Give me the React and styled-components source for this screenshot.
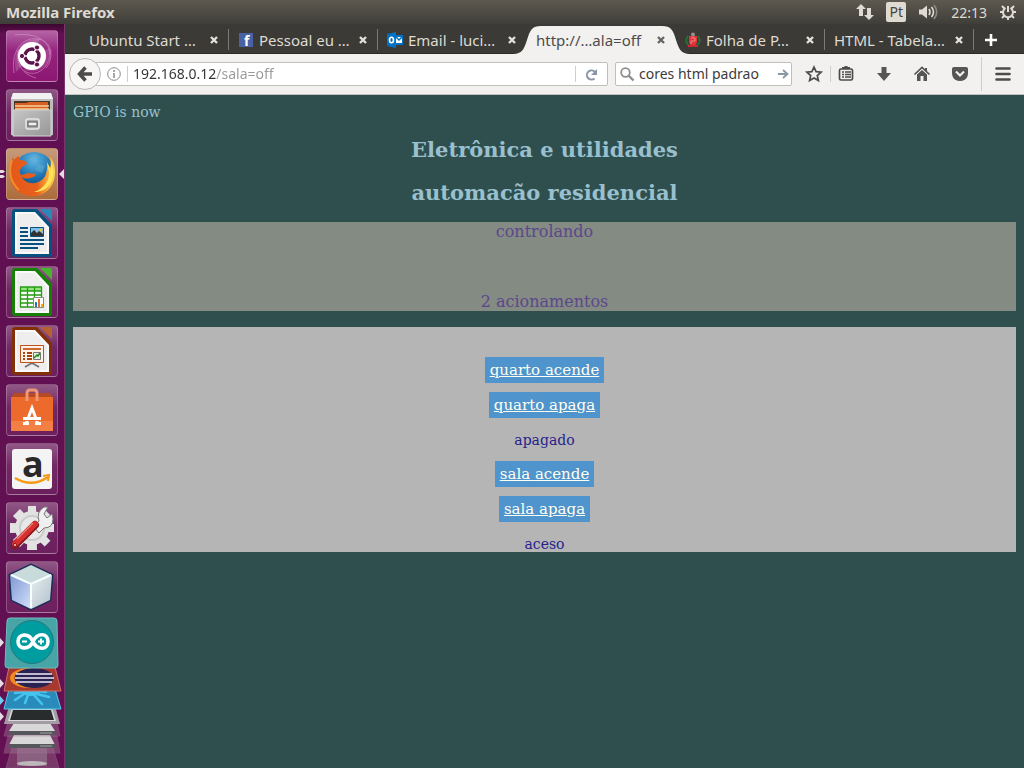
import React, { useState } from "react";
import styled, { createGlobalStyle } from "styled-components";

const uiFont = `"Noto Sans", "Open Sans", sans-serif`;
const pageFont = `"DejaVu Serif", serif`;

const GlobalStyle = createGlobalStyle`
  * {
    box-sizing: border-box;
  }
  body {
    margin: 0;
    background-color: #2f4f4f;
  }
  p, h2 {
    margin: 0;
  }
  button {
    padding: 0;
    border: 0;
    background: none;
    color: inherit;
    font: inherit;
  }
  svg {
    display: block;
    flex: none;
    overflow: visible;
  }
`;

const Desktop = styled.div`
  display: flex;
  flex-direction: column;
  min-height: 100vh;
  font-family: ${uiFont};
  font-size: 14px;
`;

const TopPanel = styled.header`
  display: flex;
  align-items: center;
  justify-content: space-between;
  height: 24px;
  padding: 0 8px 0 6px;
  background: linear-gradient(#5d594f, #3f3e39);
  color: #dfdbd2;
`;

const AppTitle = styled.p`
  font-size: 15px;
  font-weight: 700;
  line-height: 24px;
`;

const Indicators = styled.div`
  display: flex;
  align-items: center;
`;

const Indicator = styled.button`
  margin-left: ${(props) => props.$gap}px;
`;

const Keyboard = styled(Indicator)`
  width: 20px;
  height: 20px;
  border-radius: 2px;
  background-color: #dfdbd2;
  color: #46443e;
  font-size: 14px;
  line-height: 20px;
`;

const Workspace = styled.div`
  display: grid;
  grid-template-columns: 65px minmax(0, 1fr);
  flex: 1;
`;

const Launcher = styled.nav`
  display: flex;
  flex-direction: column;
  align-items: center;
  padding-top: 6px;
  padding-right: 1px;
  background: linear-gradient(#3c0731, #601052 10px, #621052);
  box-shadow: inset -1px 0 #7a3569;
`;

const Tile = styled.button`
  position: relative;
  flex: none;
  width: 52px;
  height: 52px;
  margin-bottom: 7px;
  border: 1px solid rgba(255, 255, 255, 0.22);
  border-radius: 4px;
  background: ${(props) =>
    props.$fill ||
    "linear-gradient(rgba(255,255,255,0.3), rgba(255,255,255,0.1) 45%, rgba(255,255,255,0.07))"};

  svg {
    margin: -1px;
  }
`;

const Marks = styled.span`
  position: absolute;
  top: 0;
  left: -6px;
`;

const Browser = styled.div`
  display: flex;
  flex-direction: column;
  min-width: 0;
`;

const TabStrip = styled.div`
  display: flex;
  height: 30px;
  padding: 0 16px 0 15px;
  background-color: #3b3a36;
  box-shadow: inset 0 -1px #2b2a27;
`;

const Tab = styled.div`
  position: relative;
  display: flex;
  align-items: center;
  flex: 0 1 149px;
  min-width: 0;
  padding: 2px 10px 0 9px;
  color: ${(props) => (props.$active ? "#4c4c4c" : "#dfdbd2")};
  background: ${(props) =>
    props.$line
      ? "linear-gradient(#7b7973, #7b7973) right 5px / 1px 21px no-repeat"
      : "none"};
`;

const TabShape = styled.svg`
  position: absolute;
  top: 0;
  left: -14px;
  width: calc(100% + 28px);
  height: 30px;
`;

const TabButton = styled.button`
  position: relative;
  display: flex;
  align-items: center;
  gap: 5px;
  flex: 1;
  min-width: 0;
  font-size: 15px;
  line-height: 22px;
  white-space: nowrap;
`;

const CloseButton = styled.button`
  position: relative;
  padding: 1px;
`;

const NewTab = styled.button`
  display: flex;
  align-items: center;
  justify-content: center;
  width: 34px;
  padding-top: 2px;
`;

const Toolbar = styled.div`
  display: flex;
  align-items: center;
  height: 41px;
  padding: 0 13px 0 4px;
  border-bottom: 1px solid #c4c2be;
  background-color: #f2f1f0;
  color: #4c4c4c;
`;

const BackButton = styled.button`
  z-index: 1;
  display: flex;
  flex: none;
  align-items: center;
  justify-content: center;
  width: 32px;
  height: 32px;
  border: 1px solid #b9b7b3;
  border-radius: 50%;
  background-color: #f7f6f5;
`;

const Field = styled.form`
  display: flex;
  align-items: center;
  min-width: 0;
  height: 24px;
  border: 1px solid #c1bfbb;
  border-radius: 2px;
  background-color: #fff;
`;

const AddressBar = styled(Field)`
  flex: 1;
  margin: 0 7px 0 -6px;
  padding: 0 9px 0 11px;
`;

const SearchBar = styled(Field)`
  flex: 0 0 177px;
  width: 177px;
  padding: 0 2px 0 4px;
`;

const TextInput = styled.input`
  flex: 1;
  width: 100%;
  min-width: 0;
  height: 22px;
  margin-left: 5px;
  padding: 0;
  border: 0;
  outline: 0;
  background: none;
  color: #3c3c3c;
  font: 14px/22px ${uiFont};
`;

const AddressInput = styled(TextInput)`
  background: linear-gradient(to right, #333 83px, #999 83px);
  background-clip: text;
  -webkit-text-fill-color: transparent;
`;

const Separator = styled.span`
  flex: none;
  width: 1px;
  height: ${(props) => props.$tall || 16}px;
  background-color: #cfcdca;
`;

const ToolButtons = styled.div`
  display: flex;
  align-items: center;
  gap: 20px;
  margin: 0 12px 0 6px;
`;

const ToolButton = styled.button`
  flex: none;
  margin: ${(props) => props.$margin || 0};
`;

const Page = styled.main`
  flex: 1;
  padding: 9px 8px;
  background-color: #2f4f4f;
  color: #9ac0cd;
  font-family: ${pageFont};
  font-size: 14px;
  line-height: 16px;
`;

const Heading = styled.h2`
  margin-top: ${(props) => props.$top}px;
  font-size: 21px;
  line-height: 24px;
  text-align: center;
`;

const Banner = styled.section`
  display: flex;
  flex-direction: column;
  gap: 51px;
  margin: 17px 0 16px;
  background-color: #838b83;
  color: #5d478b;
  font-size: 16px;
  line-height: 19px;
  text-align: center;
`;

const Controls = styled.section`
  display: flex;
  flex-direction: column;
  align-items: center;
  padding-top: 30px;
  background-color: #b5b5b5;
  color: #27228b;
`;

const Room = styled.div`
  display: flex;
  flex-direction: column;
  align-items: center;
  gap: 9px;

  & + & {
    margin-top: 13px;
  }
`;

const Switch = styled.a`
  padding: 0 5px;
  background-color: #4f94cd;
  color: #fffff0;
  font-size: 15px;
  line-height: 26px;
`;

const Status = styled.p`
  margin-top: 5px;
`;

const CloseIcon = ({ color }) => (
  <svg width="8" height="8" viewBox="0 0 8 8">
    <path d="M1 1l6 6M7 1l-6 6" stroke={color} strokeWidth="2.4" />
  </svg>
);

const FacebookIcon = () => (
  <svg width="16" height="16" viewBox="0 0 16 16">
    <path d="M1 1h14v14H1z" fill="#4862a3" />
    <text x="6" y="14" fontFamily="Open Sans" fontWeight="700" fontSize="14" fill="#fff">
      f
    </text>
  </svg>
);

const OutlookIcon = () => (
  <svg width="16" height="16" viewBox="0 0 16 16">
    <path d="M8 3h8v10H8z" fill="#0072c6" />
    <path d="M9 5h6v6H9z" fill="#fff" />
    <path d="M9 5l3 3 3-3" fill="none" stroke="#0072c6" strokeWidth="1.5" />
    <path d="M0 2l9-2v16l-9-2z" fill="#0072c6" />
    <ellipse cx="4.5" cy="8" rx="2" ry="2.8" fill="none" stroke="#fff" strokeWidth="1.6" />
  </svg>
);

const CrestIcon = () => (
  <svg width="16" height="16" viewBox="0 0 16 16">
    <path d="M3 4C0 8 1 12 5 14M13 4c3 4 2 8-2 10" fill="none" stroke="#26733a" strokeWidth="1.8" />
    <path d="M4 4h8v6q-1 4-4 4t-4-4z" fill="#e3343c" />
    <circle cx="8" cy="2.5" r="2" fill="#99908a" />
    <path d="M6 6h4v3H6v3" fill="none" stroke="#f08880" />
    <path d="M3 14h10" stroke="#cf2632" strokeWidth="2" />
  </svg>
);

const tabs = [
  { title: "Ubuntu Start …", line: true },
  { title: "Pessoal eu …", icon: <FacebookIcon />, line: true },
  { title: "Email - luci…", icon: <OutlookIcon /> },
  { title: "http://…ala=off", active: true },
  { title: "Folha de P…", icon: <CrestIcon />, line: true },
  { title: "HTML - Tabela…", line: true },
];

const UbuntuIcon = () => (
  <svg width="52" height="52" viewBox="0 0 52 52">
    <g fill="none" stroke="#e5a8d4" opacity="0.5">
      <path d="M8 43C4 18 20 4 36 10c10 4 12 18 4 28" />
      <path d="M45 20c-2 22-18 28-28 20" />
      <path d="M9 5c16-2 34 2 35 20" />
      <path d="M12 20c-2 14 4 24 18 28" />
    </g>
    <path d="M10 42C5 20 18 8 34 9L26 25z" fill="#fff" opacity="0.18" />
    <path d="M44 18c2 18-12 27-26 22l8-14z" fill="#fff" opacity="0.14" />
    <circle cx="26" cy="26" r="14" fill="#fff" />
    <circle cx="26" cy="26" r="7" fill="none" stroke="#5c1349" strokeWidth="3.4" />
    <path d="M26 26l-10 0M26 26l5-9M26 26l5 9" stroke="#fff" strokeWidth="1.5" />
    <circle cx="26" cy="26" r="5" fill="#fff" />
    <g fill="#5c1349" stroke="#fff">
      <circle cx="16" cy="26" r="2.6" />
      <circle cx="31" cy="17.5" r="2.6" />
      <circle cx="31" cy="34.5" r="2.6" />
    </g>
  </svg>
);

const FilesIcon = () => (
  <svg width="52" height="52" viewBox="0 0 52 52">
    <defs>
      <linearGradient id="drawer" x1="0" y1="0" x2="1" y2="1">
        <stop offset="0" stopColor="#c6c6c6" />
        <stop offset="1" stopColor="#969696" />
      </linearGradient>
    </defs>
    <path d="M7 4h38l2 6v36H5V10z" fill="#bdbdbd" />
    <path d="M7 4h38l2 6H5z" fill="#f1f1f1" />
    <path d="M8 12h36v11H8z" fill="#4b3526" />
    <path d="M9 14h12l1-1h20v10H9z" fill="#d85f24" />
    <path d="M9 17h34M9 20h34" stroke="#f8d096" strokeWidth="1.5" />
    <path d="M7 21h38v26H7z" fill="url(#drawer)" stroke="#d5d5d5" />
    <rect x="20" y="30" width="13" height="10" rx="2" fill="#aaa" stroke="#e7e7e7" strokeWidth="1.5" />
    <rect x="22" y="33" width="9" height="4" fill="#eee" stroke="#555" />
  </svg>
);

const FirefoxIcon = () => (
  <svg width="52" height="52" viewBox="0 0 52 52">
    <defs>
      <radialGradient id="globe" cx="0.5" cy="0.2" r="0.8">
        <stop offset="0" stopColor="#62b8e5" />
        <stop offset="0.6" stopColor="#176ba9" />
        <stop offset="1" stopColor="#173f73" />
      </radialGradient>
      <linearGradient id="fox" x1="0" x2="1">
        <stop offset="0" stopColor="#e4581a" />
        <stop offset="0.6" stopColor="#e8601c" />
        <stop offset="1" stopColor="#ffd84a" />
      </linearGradient>
    </defs>
    <circle cx="28" cy="24" r="20" fill="url(#globe)" />
    <path d="M25 8l5-2 2 4-4 4-6-2zM32 16l7 2-3 7-7-3z" fill="#63add2" opacity="0.5" />
    <path
      d="M7 9q-5 11-3 21c2 11 11 18 23 18 13 0 22-10 22-24 0-7-2-12-5-15 1 5 1 8 0 11l-3-5c1 11-3 17-9 19-6 3-14 0-16-5 5 3 9 1 13-1l1-2-8-1-6 2c-3-1-3-5 0-8l5-3-1-3-6-1-1-4q-3 1-5 4z"
      fill="url(#fox)"
    />
    <path d="M41 14l2 10c1 9-6 17-15 20 14 0 20-10 19-23l-2-8v9z" fill="#ffe35a" />
    <path d="M6 12Q0 30 13 42" fill="none" stroke="#f18c2c" strokeWidth="2" />
  </svg>
);

const OfficeIcon = ({ color, light, children }) => (
  <svg width="52" height="52" viewBox="0 0 52 52">
    <path d="M9 2h22l15 16v29q0 3-3 3H9q-3 0-3-3V5q0-3 3-3z" fill={color} />
    <path d="M9 5h20l14 15v27H9z" fill="#fafafa" />
    <path d="M11 7h17l13 14v24H11z" fill="#eee" />
    <path d="M34 2h10q2 0 2 2v10z" fill={light} />
    {children}
  </svg>
);

const WriterIcon = () => (
  <OfficeIcon color="#075180" light="#2d86b8">
    <path
      d="M14 21h8M14 25h8M14 29h8M14 33h24M14 37h24M14 41h18"
      stroke="#075180"
      strokeWidth="2"
    />
    <path d="M24.5 20.5h13v9h-13z" fill="#84bfe5" stroke="#075180" />
    <path d="M25 29v-3l3-3 3 3 2-2 4 3v2z" fill="#333" />
    <circle cx="35" cy="23" r="1.5" fill="#f0c02c" />
  </OfficeIcon>
);

const CalcIcon = () => (
  <OfficeIcon color="#168006" light="#48b42e">
    <path d="M14 21h22v20H14z" fill="#fff" />
    <path d="M14 21h22v4H14z" fill="#91e57a" />
    <path
      d="M14.5 21v20M21.5 21v20M28.5 21v20M35.5 21v20M14 21h22M14 25h22M14 29h22M14 33h22M14 37h22M14 41h22"
      stroke="#269b13"
      strokeWidth="1.3"
    />
    <path d="M27.5 31.5h10v10h-10z" fill="#fff" stroke="#888" />
    <path d="M29 36h2v5h-2z" fill="#2476bf" />
    <path d="M32 33h2v8h-2z" fill="#e5702a" />
    <path d="M35 38h2v3h-2z" fill="#f2b600" />
  </OfficeIcon>
);

const ImpressIcon = () => (
  <OfficeIcon color="#843006" light="#b76034">
    <path d="M26 38l-7 4M26 38l7 4" stroke="#777" strokeWidth="2" />
    <path d="M14.5 20.5h23v17h-23z" fill="#fff3e8" stroke="#c4501d" />
    <path d="M17 24h18" stroke="#cf672e" strokeWidth="2" />
    <path d="M17 28h2M17 31h2M17 34h2M21 28h5M21 31h5M21 34h5" stroke="#a64317" strokeWidth="2" />
    <path d="M27.5 27.5h7v7h-7z" fill="#e3eee1" stroke="#777" />
    <path d="M28 33l3-3 1 1 2-3" fill="none" stroke="#268620" strokeWidth="1.5" />
  </OfficeIcon>
);

const SoftwareIcon = () => (
  <svg width="52" height="52" viewBox="0 0 52 52">
    <path d="M8 9h36l3 5H5z" fill="#b74924" />
    <path d="M5 13h42v34H5z" fill="#ed6a2d" />
    <path d="M5 37h42v10H5z" fill="#f47f45" />
    <path d="M21 17V9q0-3 3-3h4q3 0 3 3v8" fill="none" stroke="#ee9876" strokeWidth="3" />
    <path d="M20 40l6-16 6 16M17 34.5h18M17 39.5h6M29 39.5h6" fill="none" stroke="#fff" strokeWidth="3" />
    <path d="M18 36.5h15" stroke="#ed6a2d" />
  </svg>
);

const AmazonIcon = () => (
  <svg width="52" height="52" viewBox="0 0 52 52">
    <rect x="6" y="6" width="40" height="40" rx="3" fill="#f4f4f4" />
    <text x="16" y="34" fontFamily="Open Sans" fontWeight="700" fontSize="36" fill="#292929">
      a
    </text>
    <path d="M9 35q17 10 33-1" fill="none" stroke="#f49a17" strokeWidth="2.5" />
    <path d="M37 33l6-1-1 6" fill="none" stroke="#f49a17" strokeWidth="2" />
  </svg>
);

const SettingsIcon = () => (
  <svg width="52" height="52" viewBox="0 0 52 52">
    <g fill="#e2e2e2">
      {[0, 45, 90, 135].map((angle) => (
        <path key={angle} d="M22 4h8l1 44H21z" transform={`rotate(${angle} 26 26)`} />
      ))}
      <circle cx="26" cy="26" r="17" />
    </g>
    <circle cx="26" cy="26" r="12" fill="#e8e8e8" stroke="#cbcbcb" strokeWidth="2" />
    <path
      d="M28 25l5-6q-3-9 5-14l4 0-4 7 3 4 5-4 1 5q0 9-9 9l-5 5z"
      fill="#f0f0f0"
      stroke="#777"
    />
    <path d="M29 23L9 43" stroke="#8a1519" strokeWidth="8" strokeLinecap="round" />
    <path d="M29 22L9 42" stroke="#d63030" strokeWidth="6" strokeLinecap="round" />
    <path d="M27 21L11 37" stroke="#f07a6e" strokeWidth="1.5" />
    <circle cx="9" cy="43" r="1.5" fill="#eee" stroke="#811" />
  </svg>
);

const CubeIcon = () => (
  <svg width="52" height="52" viewBox="0 0 52 52">
    <defs>
      <linearGradient id="cubeLeft" x1="0" x2="1" y2="1">
        <stop offset="0" stopColor="#7f97d3" />
        <stop offset="1" stopColor="#d5e2fb" />
      </linearGradient>
      <linearGradient id="cubeRight" x1="0" x2="1" y2="1">
        <stop offset="0" stopColor="#e6efef" />
        <stop offset="1" stopColor="#b1bfcb" />
      </linearGradient>
    </defs>
    <path
      d="M25 4l21 10-2 25-19 9L6 39 4 14z"
      fill="#dce6e7"
      stroke="#1a2c58"
      strokeWidth="3"
      strokeLinejoin="round"
    />
    <path d="M4 14l21 9v25L6 39z" fill="url(#cubeLeft)" />
    <path d="M25 23l21-9-2 25-19 9z" fill="url(#cubeRight)" />
    <path d="M25 4l21 10-21 9L4 14z" fill="#c9dada" />
    <path d="M5 14l20 9 20-9M25 23v24" fill="none" stroke="#f5ffff" strokeWidth="2" />
  </svg>
);

const RunningMarks = () => (
  <svg width="64" height="52" viewBox="0 0 64 52">
    <path d="M0 22h3l2 1.5-2 1.500H0zM0 27h3l2 1.5-2 1.500H0zM64 21v10l-5-5z" fill="#e4dce2" />
  </svg>
);

// Launcher entries that no longer fit, squeezed together at the bottom
const FoldedTiles = () => (
  <svg width="64" height="148" viewBox="0 620 64 148">
    <path d="M15 738h35l9 30H6z" fill="#91607f" opacity="0.5" stroke="#a37c98" />
    <path d="M17 748h30v18H17z" fill="#92718a" opacity="0.7" />
    <ellipse cx="32" cy="763.5" rx="15" ry="2.5" fill="#bdb8bb" />
    <path d="M8 736h49l3 17H4z" fill="#9e7290" opacity="0.45" stroke="#a37c98" />
    <path d="M14 735h36l5 10H9z" fill="#d8d8d8" />
    <path d="M9 744h46v4H9z" fill="#55575a" />
    <path d="M8 722h49l3 14H4z" fill="#9e7290" opacity="0.45" stroke="#a37c98" />
    <path d="M14 723h36l5 8H9z" fill="#d8d8d8" />
    <path d="M9 731h46v4H9z" fill="#55575a" />
    <path d="M40 733h12M40 746h12" stroke="#a5a5a5" />
    <path d="M9 706h46l5 18H4z" fill="#a39ca4" />
    <path d="M12 708h40l4 13H8z" fill="#dadada" />
    <path d="M13 710h38l3 10H10z" fill="#292c2c" />
    <path d="M9 689h46l6 20H4z" fill="#288bba" stroke="#5ec4e9" />
    <ellipse cx="31" cy="692" rx="9" ry="4" fill="#43c4f0" />
    <path
      d="M24 694l-9 6M28 695l-3 8M34 695l8 9M37 694l12 3M24 692l-9 1M38 691l8 1"
      stroke="#43c4f0"
      strokeWidth="2.6"
      strokeLinecap="round"
    />
    <path d="M9 667h46l6 24H4z" fill="#a8392f" stroke="#cb7064" />
    <ellipse cx="29" cy="678" rx="19" ry="10" fill="#f58a1f" />
    <ellipse cx="34" cy="678" rx="19.5" ry="10" fill="#292151" />
    <path d="M16 674h36M15 678h39M16 682h36" stroke="#eeeaf5" strokeWidth="1.5" />
    <path d="M10 618h44q3 0 3 3l1 44q0 3-3 3H8q-3 0-3-3l2-44q0-3 3-3z" fill="#47a4a7" stroke="#75b8ba" />
    <circle cx="32" cy="642" r="21.5" fill="#009da0" stroke="#26777d" />
    <path
      d="M32 641.500c-4-9-15-8-15 0s11 9 15 0 15-9 15 0-11 9-15 0z"
      transform="translate(1 0)"
      fill="none"
      stroke="#fff"
      strokeWidth="3.6"
    />
    <path d="M22 641.500h5M38 641.500h6M41 638.500v6" stroke="#fff" strokeWidth="1.8" />
    <path d="M0 638l4 4.500-4 4.500zM0 679l4 4.500-4 4.500zM0 712l4 4.500-4 4.500z" fill="#e4dce2" />
    <path d="M0 696l4 4.500-4 4.500z" fill="#72cdf3" />
  </svg>
);

const apps = [
  { name: "Ubuntu", icon: <UbuntuIcon />, fill: "linear-gradient(#b465a5, #95247f 40%, #8c1772)" },
  { name: "Files", icon: <FilesIcon /> },
  { name: "Firefox", icon: <FirefoxIcon />, fill: "linear-gradient(#c59a7a, #ad6c3c)", running: true },
  { name: "Writer", icon: <WriterIcon /> },
  { name: "Calc", icon: <CalcIcon /> },
  { name: "Impress", icon: <ImpressIcon /> },
  { name: "Software", icon: <SoftwareIcon /> },
  { name: "Amazon", icon: <AmazonIcon /> },
  { name: "Settings", icon: <SettingsIcon /> },
  { name: "NetBeans", icon: <CubeIcon /> },
];

const rooms = [
  { name: "quarto", status: "apagado" },
  { name: "sala", status: "aceso" },
];

function SystemBar() {
  return (
    <TopPanel>
      <AppTitle>Mozilla Firefox</AppTitle>
      <Indicators>
        <Indicator aria-label="Network" $gap={0}>
          <svg width="18" height="16" viewBox="0 0 18 16">
            <path d="M5 0l5 5H7v7H3V5H0zM13 16l-5-5h3V4h4v7h3z" fill="#dfdbd2" />
          </svg>
        </Indicator>
        <Keyboard $gap={12}>Pt</Keyboard>
        <Indicator aria-label="Volume" $gap={12}>
          <svg width="21" height="16" viewBox="0 0 21 16">
            <path d="M1 5.5h3l5-4v13l-5-4H1z" fill="#dfdbd2" />
            <g fill="none" strokeWidth="1.6">
              <path d="M11 5q2 3 0 6M13.5 3q4 5 0 10" stroke="#dfdbd2" />
              <path d="M16 1q5.500 7 0 14" stroke="#8d8a81" />
            </g>
          </svg>
        </Indicator>
        <Indicator $gap={12}>22:13</Indicator>
        <Indicator aria-label="Session" $gap={13}>
          <svg width="16" height="16" viewBox="0 0 16 16">
            <g stroke="#dfdbd2" strokeWidth="2" fill="none">
              <path d="M5.5 4a5 5 0 1 0 5 0M8 2v6" />
              <path d="M0 8h3M13 8h3M8 13v3M2 2l3 3M14 2l-3 3M2 14l3-3M14 14l-3-3" />
            </g>
          </svg>
        </Indicator>
      </Indicators>
    </TopPanel>
  );
}

function Tabs() {
  return (
    <TabStrip>
      {tabs.map((tab) => (
        <Tab key={tab.title} $active={tab.active} $line={tab.line}>
          {tab.active && (
            <TabShape viewBox="0 0 177 30" preserveAspectRatio="none">
              <path
                d="M0 30C9 30 11 25 14 16 17 6 19 2 28 2H149c9 0 11 4 14 14 3 9 5 14 14 14z"
                fill="#f2f1f0"
              />
            </TabShape>
          )}
          <TabButton>
            {tab.icon}
            {tab.title}
          </TabButton>
          <CloseButton aria-label="Close tab">
            <CloseIcon color={tab.active ? "#666" : "#e4e1da"} />
          </CloseButton>
        </Tab>
      ))}
      <NewTab aria-label="New tab">
        <svg width="12" height="12" viewBox="0 0 12 12">
          <path d="M6 0v12M0 6h12" stroke="#fff" strokeWidth="2.6" />
        </svg>
      </NewTab>
    </TabStrip>
  );
}

function NavBar() {
  const [address, setAddress] = useState("192.168.0.12/sala=off");
  const [search, setSearch] = useState("cores html padrao");

  return (
    <Toolbar>
      <BackButton aria-label="Back">
        <svg width="16" height="16" viewBox="0 0 16 16">
          <path d="M8.5 1.5L2.5 8l6 6.500M3 8h12" fill="none" stroke="#4c4c4c" strokeWidth="3.5" />
        </svg>
      </BackButton>
      <AddressBar>
        <svg width="14" height="14" viewBox="0 0 14 14">
          <circle cx="7" cy="7" r="6.3" fill="none" stroke="#8a8a8a" />
          <path d="M7 6v5M7 3v2" stroke="#8a8a8a" strokeWidth="1.5" />
        </svg>
        <Separator style={{ marginLeft: 6 }} />
        <AddressInput
          aria-label="Address"
          value={address}
          onChange={(e) => setAddress(e.target.value)}
        />
        <Separator />
        <ToolButton type="button" aria-label="Reload" $margin="0 0 0 9px">
          <svg width="13" height="13" viewBox="0 0 13 13">
            <path d="M9.5 10.500A4.6 4.6 0 1 1 10 4" fill="none" stroke="#8996a5" strokeWidth="2" />
            <path d="M12 1v6H6z" fill="#8996a5" />
          </svg>
        </ToolButton>
      </AddressBar>
      <SearchBar>
        <svg width="14" height="14" viewBox="0 0 14 14">
          <circle cx="5.5" cy="5.5" r="4.3" fill="none" stroke="#8e8e8e" strokeWidth="1.8" />
          <path d="M8.5 8.500l5 5" stroke="#8e8e8e" strokeWidth="2.4" />
        </svg>
        <TextInput
          aria-label="Search"
          value={search}
          onChange={(e) => setSearch(e.target.value)}
        />
        <ToolButton type="button" aria-label="Go">
          <svg width="11" height="10" viewBox="0 0 11 10">
            <path d="M0 5h9M5 1l4.500 4L5 9" fill="none" stroke="#8996a5" strokeWidth="1.8" />
          </svg>
        </ToolButton>
      </SearchBar>
      <ToolButton aria-label="Bookmark" $margin="0 7px 0 13px">
        <svg width="18" height="18" viewBox="0 0 18 18">
          <path
            d="M9 2l2.100 4.700 5 .5-3.800 3.400 1.100 5L9 13l-4.400 2.600 1.100-5L1.900 7.200l5-.5z"
            fill="none"
            stroke="#4c4c4c"
            strokeWidth="1.7"
          />
        </svg>
      </ToolButton>
      <Separator />
      <ToolButtons>
        <ToolButton aria-label="Bookmarks list">
          <svg width="18" height="18" viewBox="0 0 18 18">
            <path d="M5 4h8V2h-2q0-1-2-1T7 2H5z" fill="#4c4c4c" />
            <rect x="2.5" y="4" width="13" height="11" rx="1.5" fill="none" stroke="#4c4c4c" strokeWidth="1.7" />
            <path d="M5 7h2M8 7h6M5 9.500h2M8 9.500h6M5 12h2M8 12h6" stroke="#4c4c4c" strokeWidth="1.3" />
          </svg>
        </ToolButton>
        <ToolButton aria-label="Downloads">
          <svg width="18" height="18" viewBox="0 0 18 18">
            <path d="M6.500 2h5v6H16l-7 8-7-8h4.500z" fill="#555" />
          </svg>
        </ToolButton>
        <ToolButton aria-label="Home">
          <svg width="18" height="18" viewBox="0 0 18 18">
            <path d="M1.500 9.500L9 2.500l7.500 7" fill="none" stroke="#555" strokeWidth="1.7" />
            <path d="M4 9.500l5-4.500 5 4.500V16h-3.500v-5h-3v5H4zM12 3h2v3h-2z" fill="#555" />
          </svg>
        </ToolButton>
        <ToolButton aria-label="Pocket">
          <svg width="18" height="18" viewBox="0 0 18 18">
            <path d="M3 2h12q2 0 2 2v4q0 4-3 6.500-5 3-10 0Q1 12 1 8V4q0-2 2-2z" fill="#555" />
            <path d="M5 6.500l4 4 4-4" fill="none" stroke="#f2f1f0" strokeWidth="2.2" />
          </svg>
        </ToolButton>
      </ToolButtons>
      <Separator $tall={34} />
      <ToolButton aria-label="Menu" $margin="0 0 0 13px">
        <svg width="16" height="14" viewBox="0 0 16 14">
          <path
            d="M1.500 1.500h13M1.500 7h13M1.500 12.500h13"
            stroke="#4c4c4c"
            strokeWidth="2.6"
            strokeLinecap="round"
          />
        </svg>
      </ToolButton>
    </Toolbar>
  );
}

function App() {
  return (
    <>
      <GlobalStyle />
      <Desktop>
        <SystemBar />
        <Workspace>
          <Launcher>
            {apps.map((app) => (
              <Tile key={app.name} aria-label={app.name} $fill={app.fill}>
                {app.icon}
                {app.running && (
                  <Marks>
                    <RunningMarks />
                  </Marks>
                )}
              </Tile>
            ))}
            <FoldedTiles />
          </Launcher>
          <Browser>
            <Tabs />
            <NavBar />
            <Page>
              <p>GPIO is now</p>
              <Heading $top={18}>Eletrônica e utilidades</Heading>
              <Heading $top={19}>automacão residencial</Heading>
              <Banner>
                <p>controlando</p>
                <p>2 acionamentos</p>
              </Banner>
              <Controls>
                {rooms.map((room) => (
                  <Room key={room.name}>
                    <Switch href={`#${room.name}=on`}>{room.name} acende</Switch>
                    <Switch href={`#${room.name}=off`}>{room.name} apaga</Switch>
                    <Status>{room.status}</Status>
                  </Room>
                ))}
              </Controls>
            </Page>
          </Browser>
        </Workspace>
      </Desktop>
    </>
  );
}

export default App;
